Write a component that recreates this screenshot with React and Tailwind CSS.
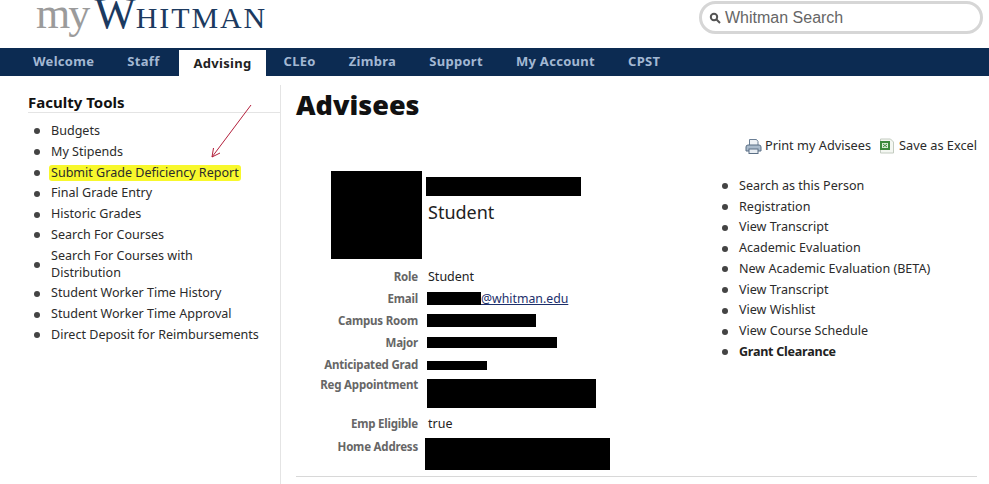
const font = "font-['Noto_Sans',sans-serif]";

const tabs = ['Welcome', 'Staff', 'Advising', 'CLEo', 'Zimbra', 'Support', 'My Account', 'CPST'];

const tools = [
  { label: 'Budgets' },
  { label: 'My Stipends' },
  { label: 'Submit Grade Deficiency Report', marked: true },
  { label: 'Final Grade Entry' },
  { label: 'Historic Grades' },
  { label: 'Search For Courses' },
  { label: 'Search For Courses with Distribution' },
  { label: 'Student Worker Time History' },
  { label: 'Student Worker Time Approval' },
  { label: 'Direct Deposit for Reimbursements' },
];

const actions = [
  'Search as this Person',
  'Registration',
  'View Transcript',
  'Academic Evaluation',
  'New Academic Evaluation (BETA)',
  'View Transcript',
  'View Wishlist',
  'View Course Schedule',
];

const Bullet = () => <span className="w-[6px] h-[6px] rounded-full bg-[#444] shrink-0" />;

const Row = ({ label, h = 'h-[22px]', top, children }) => (
  <div className={`flex ${h} ${top ? 'items-start' : 'items-center'}`}>
    <div className="w-[122px] text-right text-[11.5px] font-bold text-[#666] tracking-[-0.2px] shrink-0">{label}</div>
    <div className="flex-1 flex items-center text-[12.5px] text-[#222]">{children}</div>
  </div>
);

const PrinterIcon = () => (
  <svg width="17" height="17" viewBox="0 0 17 17">
    <path d="M4.5 1.500h7l1.500 2v4h-8.500z" fill="#eef2f6" stroke="#6b7f95" />
    <path d="M1 9q0-2 2-2h11q2 0 2 2v4H1z" fill="#a9bacb" stroke="#5b6f85" />
    <rect x="4" y="11" width="9" height="4.500" fill="#e8edf2" stroke="#5b6f85" />
  </svg>
);

const ExcelIcon = () => (
  <svg width="16" height="16" viewBox="0 0 16 16">
    <path d="M1.500 1h10l3 3v11h-13z" fill="#f4f7f2" stroke="#c3cbc0" />
    <rect x="1" y="3" width="10" height="9" fill="#3c8a3c" />
    <rect x="3" y="5" width="6" height="5" fill="#d8ecd4" />
    <path d="M4 6l4 3M8 6l-4 3" stroke="#3c8a3c" />
  </svg>
);

export default function App() {
  return (
    <div className={`relative w-[989px] h-[484px] overflow-hidden bg-white ${font}`}>
      {/* header */}
      <div className="h-[48px] flex justify-between">
        <div className="ml-[36px] -mt-[8px] flex items-baseline h-[48px] font-['Liberation_Serif',serif] leading-none">
          <span className="text-[44px] text-[#9b9b9b] tracking-[-2px]">my</span>
          <span className="ml-[6px] text-[44px] text-[#1c3a60]">W</span>
          <span className="text-[30px] text-[#1c3a60] tracking-[1.900px]">HITMAN</span>
        </div>
        <div className="mt-[1px] mr-[6px] w-[284px] h-[33px] rounded-[17px] border-[3px] border-[#d6d6d6] bg-white flex items-center pl-[7px] gap-[4px]">
          <svg width="12" height="12" viewBox="0 0 12 12" fill="none" stroke="#555" strokeWidth="2">
            <circle cx="5" cy="5" r="3.200" />
            <path d="M7.500 7.500l3.500 3.500" />
          </svg>
          <span className="font-['Liberation_Sans',sans-serif] text-[16px] text-[#666]">Whitman Search</span>
        </div>
      </div>

      {/* nav */}
      <div className="h-[28px] bg-[#0c2b52] flex pl-[16.500px] text-[13px] font-bold text-[#a3b8d3] tracking-[0.3px]">
        {tabs.map((t) =>
          t === 'Advising' ? (
            <div key={t} className="mt-[2px] ml-[3px] mr-[1px] h-[27px] px-[14.500px] bg-white text-[#222] flex items-center">{t}</div>
          ) : (
            <div key={t} className="px-[16.500px] flex items-center">{t}</div>
          )
        )}
      </div>

      <div className="flex mt-[9px]">
        {/* sidebar */}
        <div className="w-[281px] h-[399px] shrink-0 pl-[28px] border-r border-[#e4e4e4] text-[12.550px] text-[#2b2b2b]">
          <div className="h-[19px] pt-[8px] box-content text-[15px] leading-[19px] font-bold text-[#111] border-b border-[#e4e4e4]">
            Faculty Tools
          </div>
          <ul className="mt-[8px]">
            {tools.map((t) => (
              <li key={t.label} className="flex items-center gap-[11px] pl-[6px] py-[2px] leading-[16.800px]">
                <Bullet />
                {t.marked ? (
                  <span className="bg-[#f8f82c] rounded-[3px] px-[2px] -mx-[2px]">{t.label}</span>
                ) : (
                  <span className="w-[170px] whitespace-nowrap">
                    {t.label === 'Search For Courses with Distribution' ? (
                      <>Search For Courses with<br />Distribution</>
                    ) : (
                      t.label
                    )}
                  </span>
                )}
              </li>
            ))}
          </ul>
        </div>

        {/* main */}
        <div className="flex-1 pl-[15px] pr-[12px]">
          <h1 className="h-[40px] text-[27px] leading-[40px] font-black text-[#111]">Advisees</h1>
          <div className="flex justify-end items-center gap-[8px] mt-[11px] h-[20px] text-[12.750px] text-[#2b2b2b]">
            <span className="flex items-center gap-[3px]"><PrinterIcon />Print my Advisees</span>
            <span className="flex items-center gap-[4px]"><ExcelIcon />Save as Excel</span>
          </div>

          <div className="flex mt-[15px]">
            <div className="w-[426px] shrink-0">
              <div className="flex h-[88px] pl-[35px]">
                <div className="w-[91px] h-[88px] bg-black" />
                <div className="ml-[4px] pt-[6px]">
                  <div className="w-[155px] h-[19px] bg-black" />
                  <div className="ml-[2px] mt-[5px] text-[18px] leading-[22px] text-[#222]">Student</div>
                </div>
              </div>
              <div className="mt-[7px]">
                <Row label="Role"><span className="ml-[10px]">Student</span></Row>
                <Row label="Email">
                  <span className="ml-[9px] mb-[2px] w-[54px] h-[13px] bg-black" />
                  <span className="text-[12.300px] text-[#1c2f6b] underline">@whitman.edu</span>
                </Row>
                <Row label="Campus Room"><span className="ml-[9px] mb-[2px] w-[109px] h-[13px] bg-black" /></Row>
                <Row label="Major"><span className="ml-[9px] mb-[2px] w-[130px] h-[11px] bg-black" /></Row>
                <Row label="Anticipated Grad"><span className="ml-[9px] w-[60px] h-[9px] bg-black" /></Row>
                <Row label="Reg Appointment" h="h-[37px]" top>
                  <span className="ml-[9px] mt-[3px] w-[169px] h-[29px] bg-black" />
                </Row>
                <Row label="Emp Eligible"><span className="ml-[10px]">true</span></Row>
                <div className="mt-[3px]">
                  <Row label="Home Address" h="h-[39px]" top>
                    <span className="ml-[7px] w-[185px] h-[32px] bg-black" />
                  </Row>
                </div>
              </div>
            </div>

            <ul className="pt-[5px] text-[12.550px] text-[#2b2b2b]">
              {actions.map((a, i) => (
                <li key={i} className="flex items-center gap-[11px] h-[20.750px]">
                  <Bullet />
                  {a}
                </li>
              ))}
              <li className="flex items-center gap-[11px] h-[20.750px] font-bold text-[#222] tracking-[-0.25px]">
                <Bullet />
                Grant Clearance
              </li>
            </ul>
          </div>

          <div className="mt-[-1px] border-t border-[#d8d8d8]" />
        </div>
      </div>

      {/* hand-drawn arrow over the page */}
      <svg className="absolute left-[205px] top-[100px]" width="52" height="62" viewBox="0 0 52 62" fill="none" stroke="#b3203c" strokeWidth="1">
        <path d="M46 5L7 57" />
        <path d="M7 57l1.500-9M7 57l8-4" />
      </svg>
    </div>
  );
}
